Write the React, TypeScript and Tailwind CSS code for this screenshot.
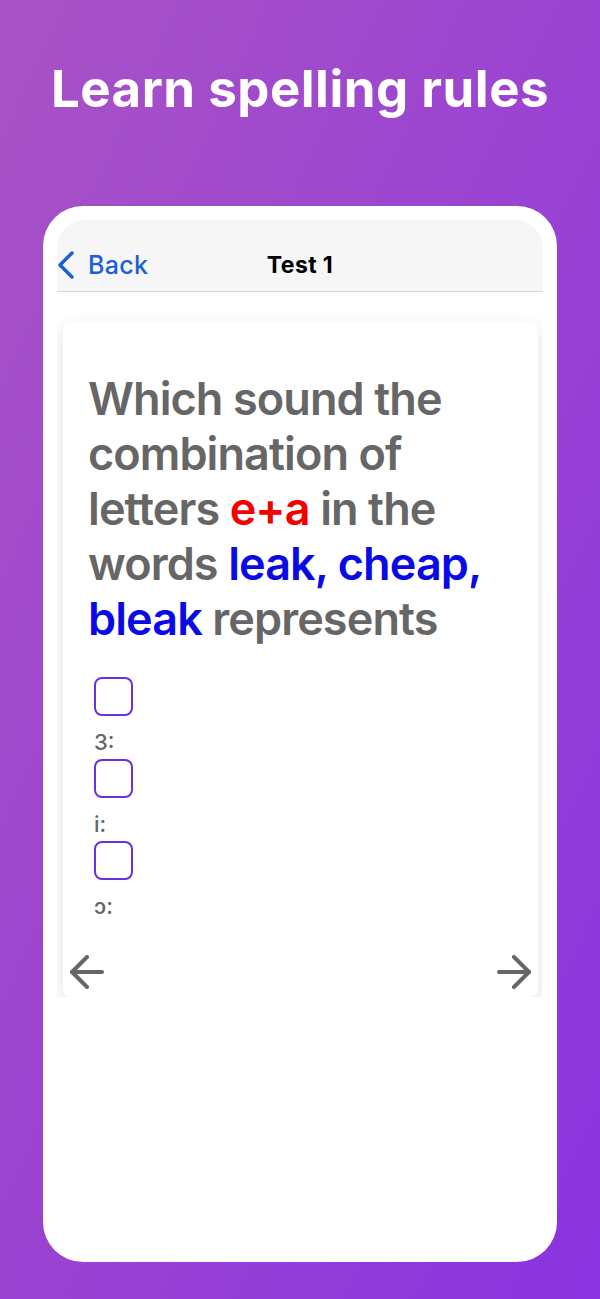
import React from "react";

const font = { fontFamily: "Inter, 'Noto Sans', 'Liberation Sans', sans-serif" };

function Option({ label }: { label: string }) {
  return (
    <div className="flex flex-col">
      <div className="w-[39px] h-[39px] rounded-[8px] border-[2.5px] border-[#6a2fe0] ml-[6px]" />
      <div className="h-[43px] pl-[6px] pt-[14px] text-[22px] leading-[24px] font-medium text-[#666]">{label}</div>
    </div>
  );
}

function Arrow({ dir }: { dir: "left" | "right" }) {
  return (
    <svg width="36" height="34" viewBox="0 0 36 34" fill="none" stroke="#666" strokeWidth="4" strokeLinecap="round" strokeLinejoin="round" className={dir === "right" ? "rotate-180" : ""}>
      <path d="M33 17H3" />
      <path d="M18 2 3 17l15 15" />
    </svg>
  );
}

export default function App(): React.ReactElement {
  return (
    <div className="w-[600px] h-[1299px] bg-gradient-to-br from-[#a852c5] via-[#9a43d2] to-[#8a33e0] flex flex-col items-center" style={font}>
      <h1 className="mt-[58px] text-[51px] leading-[62px] font-bold text-white tracking-[0.5px]">Learn spelling rules</h1>

      <div className="mt-[86px] w-[514px] h-[1056px] bg-white rounded-[40px] p-[14px]">
        <div className="rounded-t-[28px] overflow-hidden">
          <div className="h-[72px] bg-[#f6f6f6] border-b border-[#d9d9d9] relative flex items-center pt-[19px]">
            <div className="flex items-center text-[#1a5fd8]">
              <svg width="20" height="30" viewBox="0 0 20 30" fill="none" stroke="#1a5fd8" strokeWidth="3.4" strokeLinecap="round" strokeLinejoin="round">
                <path d="M15 3 3 15l12 12" />
              </svg>
              <span className="ml-[11px] text-[25px] leading-[30px] font-medium tracking-[0.3px]">Back</span>
            </div>
            <div className="absolute left-0 right-0 top-[19px] bottom-0 flex items-center justify-center text-[23px] font-bold text-black tracking-[0.4px] pointer-events-none">
              Test 1
            </div>
          </div>

          <div className="px-[6px] pt-[30px]">
            <div className="w-[475px] h-[675px] bg-white rounded-[8px] shadow-[0_6px_18px_rgba(0,0,0,0.12)] flex flex-col pt-[49px]">
              <p className="px-[25px] text-[45px] leading-[55px] font-semibold text-[#666] tracking-[-0.9px]">
                Which sound the combination of letters <span className="text-[#f40000]">e+a</span> in the words{" "}
                <span className="text-[#0a0ae6]">leak, cheap, bleak</span> represents
              </p>
              <div className="mt-[31px] px-[25px] flex flex-col">
                <Option label="3:" />
                <Option label="i:" />
                <Option label="ɔ:" />
              </div>
              <div className="mt-auto mb-[8px] px-[6px] flex justify-between">
                <Arrow dir="left" />
                <Arrow dir="right" />
              </div>
            </div>
          </div>
        </div>
      </div>
    </div>
  );
}
